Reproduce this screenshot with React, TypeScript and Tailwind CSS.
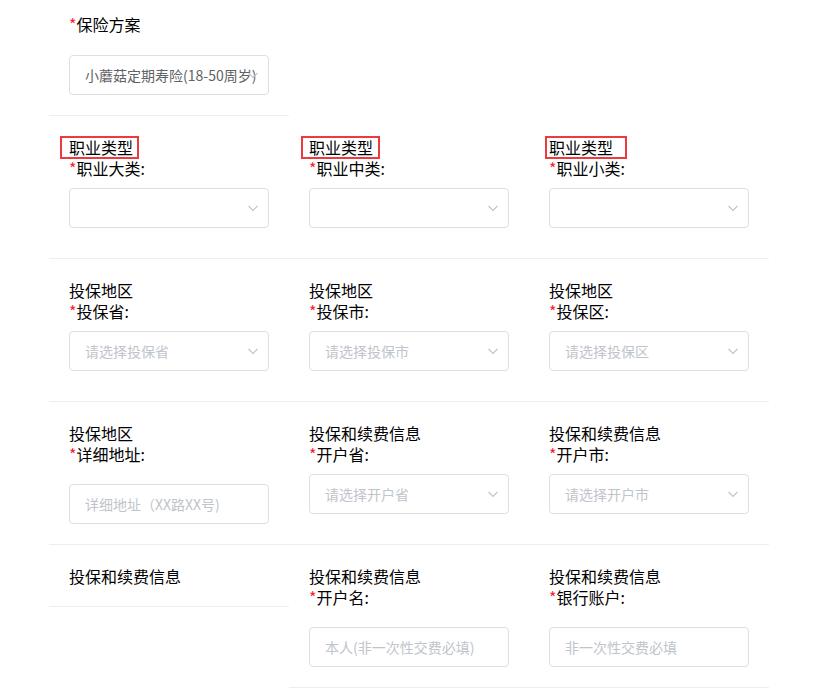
import React from "react";

type Field = {
  group?: string;
  label?: string;
  kind?: "select" | "input";
  value?: string;
  placeholder?: string;
  mark?: string; // red annotation box position
};

const Arrow = () => (
  <svg width="12" height="12" viewBox="0 0 12 12" className="absolute right-[9px] top-1/2 -translate-y-1/2">
    <polyline points="1.5,4 6,8.5 10.5,4" fill="none" stroke="#c0c4cc" strokeWidth="1.1" />
  </svg>
);

const Control = ({ f }: { f: Field }) => {
  const text = f.value ? (
    <span className="text-[#606266]">{f.value}</span>
  ) : (
    <span className="text-[#c0c4cc]">{f.placeholder}</span>
  );
  return (
    <div className="relative w-[200px] h-10 rounded-[4px] border border-[#dcdfe6] bg-white">
      <div className={`h-full pl-[15px] ${f.kind === "select" ? "pr-[30px]" : "pr-[15px]"} overflow-hidden whitespace-nowrap text-sm leading-[38px]`}>
        {text}
      </div>
      {f.kind === "select" && <Arrow />}
    </div>
  );
};

const Label = ({ text }: { text: string }) => (
  <div className="h-[21px] leading-[21px]">
    <span className="text-[#f5222d]">*</span>
    {text}
  </div>
);

const Cell = ({ f, bottom = true }: { f: Field; bottom?: boolean }) => {
  const isInput = f.kind === "input";
  return (
    <div className={`w-[240px] pl-5 pt-[21px] ${f.kind ? (isInput ? "pb-5" : "pb-[30px]") : "pb-[19px]"} ${bottom ? "border-b border-[#ebeef5]" : ""}`}>
      <div className="relative h-[21px] leading-[21px]">
        {f.group}
        {f.mark && <div className={`absolute top-[-1px] h-[23px] border-2 border-[#ec3a3d] ${f.mark}`} />}
      </div>
      {f.label && <Label text={f.label} />}
      {f.kind && (
        <div className={isInput ? "mt-[19px]" : "mt-[9px]"}>
          <Control f={f} />
        </div>
      )}
    </div>
  );
};

const rows: Field[][] = [
  [
    { group: "职业类型", label: "职业大类:", kind: "select", mark: "left-[-9px] w-[79px]" },
    { group: "职业类型", label: "职业中类:", kind: "select", mark: "left-[-8px] w-[79px]" },
    { group: "职业类型", label: "职业小类:", kind: "select", mark: "left-[-4px] w-[82px]" },
  ],
  [
    { group: "投保地区", label: "投保省:", kind: "select", placeholder: "请选择投保省" },
    { group: "投保地区", label: "投保市:", kind: "select", placeholder: "请选择投保市" },
    { group: "投保地区", label: "投保区:", kind: "select", placeholder: "请选择投保区" },
  ],
  [
    { group: "投保地区", label: "详细地址:", kind: "input", placeholder: "详细地址（XX路XX号)" },
    { group: "投保和续费信息", label: "开户省:", kind: "select", placeholder: "请选择开户省" },
    { group: "投保和续费信息", label: "开户市:", kind: "select", placeholder: "请选择开户市" },
  ],
  [
    { group: "投保和续费信息" },
    { group: "投保和续费信息", label: "开户名:", kind: "input", placeholder: "本人(非一次性交费必填)" },
    { group: "投保和续费信息", label: "银行账户:", kind: "input", placeholder: "非一次性交费必填" },
  ],
];

export default function App() {
  return (
    <div
      className="w-[818px] h-[698px] bg-white text-base text-black overflow-hidden"
      style={{ fontFamily: '"Microsoft YaHei", "Noto Sans CJK SC", sans-serif' }}
    >
      <div className="ml-[49px] w-[720px]">
        {/* 保险方案 */}
        <div className="w-[240px] pl-5 pt-[14px] pb-5 border-b border-[#ebeef5]">
          <Label text="保险方案" />
          <div className="mt-5">
            <Control f={{ kind: "select", value: "小蘑菇定期寿险(18-50周岁)" }} />
          </div>
        </div>
        {rows.map((row, i) => (
          <div key={i} className="flex items-start">
            {row.map((f, j) => (
              <Cell key={j} f={f} />
            ))}
          </div>
        ))}
      </div>
    </div>
  );
}
